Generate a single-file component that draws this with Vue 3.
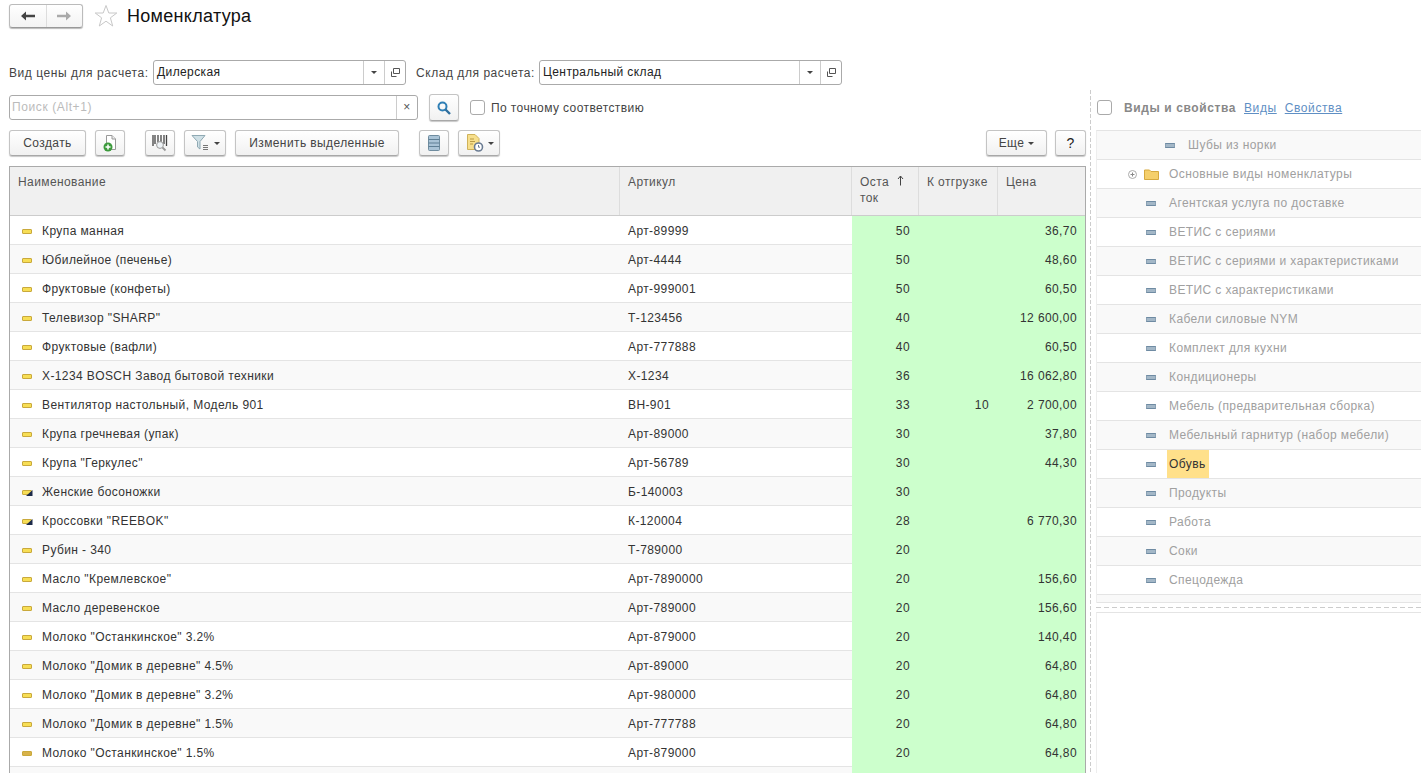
<template>
  <div class="page">
    <!-- шапка формы -->
    <div class="head">
      <div class="nav">
        <button class="nav-btn">
          <svg width="16" height="12" viewBox="0 0 16 12"><path d="M1 6 L6 1.5 V4.8 H15 V7.2 H6 V10.5 Z" fill="#444" /></svg>
        </button>
        <button class="nav-btn">
          <svg width="16" height="12" viewBox="0 0 16 12"><path d="M15 6 L10 1.5 V4.8 H1 V7.2 H10 V10.5 Z" fill="#aaa" /></svg>
        </button>
      </div>
      <svg class="star" width="24" height="24" viewBox="0 0 24 24"><path d="M12 1.5 L14.8 9 H22.8 L16.4 13.8 L18.7 22 L12 17.2 L5.3 22 L7.6 13.8 L1.2 9 H9.2 Z" fill="#fff" stroke="#c8c8c8" /></svg>
      <h1 class="title">Номенклатура</h1>
    </div>

    <div class="body">
      <div class="left">
        <div class="params">
          <label class="lbl">Вид цены для расчета:</label>
          <div class="combo combo-a">
            <span class="combo-val">Дилерская</span>
            <span class="combo-btn"><i class="caret"></i></span>
            <span class="combo-btn">
              <svg width="11" height="11" viewBox="0 0 11 11"><path d="M3.5 1.5 H9.5 V6.5 H3.5 Z M1.5 4.5 V9.5 H6.5" fill="none" stroke="#555" /></svg>
            </span>
          </div>
          <label class="lbl lbl-2">Склад для расчета:</label>
          <div class="combo combo-b">
            <span class="combo-val">Центральный склад</span>
            <span class="combo-btn"><i class="caret"></i></span>
            <span class="combo-btn">
              <svg width="11" height="11" viewBox="0 0 11 11"><path d="M3.5 1.5 H9.5 V6.5 H3.5 Z M1.5 4.5 V9.5 H6.5" fill="none" stroke="#555" /></svg>
            </span>
          </div>
        </div>

        <div class="search-row">
          <div class="search">
            <span class="search-ph">Поиск (Alt+1)</span>
            <span class="search-x">×</span>
          </div>
          <button class="btn btn-find">
            <svg width="16" height="16" viewBox="0 0 16 16"><circle cx="6.5" cy="6.5" r="4" fill="none" stroke="#2f7fb5" stroke-width="2" /><path d="M9.5 9.5 L14 14" stroke="#2f6f9f" stroke-width="2.4" /></svg>
          </button>
          <span class="check"></span>
          <span class="check-lbl">По точному соответствию</span>
        </div>

        <div class="toolbar">
          <button class="btn btn-create">Создать</button>
          <button class="btn btn-icon ml9">
            <svg width="18" height="20" viewBox="0 0 18 20"><path d="M5.5 2.5 H11 L14.500 6 V16.500 H5.5 Z" fill="#fff" stroke="#999" /><path d="M11 2.500 V6 H14.500" fill="#eee" stroke="#999" /><circle cx="7" cy="14" r="4.500" fill="#3c9a3c" /><path d="M7 11.500 V16.500 M4.500 14 H9.500" stroke="#fff" stroke-width="1.500" /></svg>
          </button>
          <button class="btn btn-icon ml20">
            <svg width="20" height="20" viewBox="0 0 20 20"><path d="M3 2 V13 M5 2 V11 M8 2 V9 M11 2 V9 M14 2 V11 M16.500 2 V13" stroke="#444" stroke-width="1.300" /><circle cx="10" cy="12" r="3.400" fill="#eef3f6" stroke="#999" /><path d="M12.500 14.500 L15.500 17.500" stroke="#999" stroke-width="1.800" /></svg>
          </button>
          <button class="btn btn-filter ml9">
            <svg width="22" height="20" viewBox="0 0 22 20"><path d="M2 2.500 H15 L10 8.500 V16 L7.500 14 V8.500 Z" fill="#cfe0e6" stroke="#8fa9b3" /><path d="M13 12.500 H18 M13 14.500 H18 M13 16.500 H18" stroke="#777" /></svg>
            <i class="caret"></i>
          </button>
          <button class="btn btn-edit ml9">Изменить выделенные</button>
          <button class="btn btn-icon ml20">
            <svg width="14" height="18" viewBox="0 0 14 18"><rect x="1.500" y="1.500" width="11" height="15" rx="1" fill="#a9c3d6" stroke="#6f8c9f" /><path d="M1.500 5.500 H12.500 M1.500 9 H12.500 M1.500 12.500 H12.500" stroke="#5f7f95" /></svg>
          </button>
          <button class="btn btn-report ml9">
            <svg width="20" height="20" viewBox="0 0 20 20"><path d="M2.500 1.500 H10 L14 5.500 V16.500 H2.500 Z" fill="#f7df8c" stroke="#cfb25a" /><path d="M5 6 H9 M5 8.500 H10 M5 11 H8" stroke="#b99b45" /><circle cx="13.500" cy="14" r="4" fill="#fff" stroke="#6a7b92" stroke-width="1.600" /><path d="M13.500 12 V14.200 H15" fill="none" stroke="#6a7b92" /></svg>
            <i class="caret"></i>
          </button>
          <button class="btn btn-more">Еще <i class="caret"></i></button>
          <button class="btn btn-help">?</button>
        </div>

        <div class="table">
          <div class="tr thead">
            <div class="th">Наименование</div>
            <div class="th">Артикул</div>
            <div class="th th-rest">
              <span>Оста<br>ток</span>
              <svg class="sort" width="7" height="11" viewBox="0 0 7 11"><path d="M3.500 10.500 V1 M1 4 L3.500 1 L6 4" fill="none" stroke="#444" /></svg>
            </div>
            <div class="th">К отгрузке</div>
            <div class="th">Цена</div>
          </div>
          <div v-for="(r, i) in rows" :key="i" class="tr row" :class="{ odd: i % 2 === 1 }">
            <div class="td td-name">
              <svg class="mark" width="11" height="7" viewBox="0 0 11 7">
                <rect x="0.500" y="1.500" width="9" height="4" rx="0.500" :fill="i === 18 ? '#d8b24a' : '#f7de55'" stroke="#c9a93c" />
                <path v-if="r.shoe" d="M4 7 L10.500 1 V7 Z" fill="#1d2b4a" />
              </svg>
              <span>{{ r.name }}</span>
            </div>
            <div class="td">{{ r.art }}</div>
            <div class="td num green">{{ r.rest }}</div>
            <div class="td num green">{{ r.ship }}</div>
            <div class="td num green">{{ r.price }}</div>
          </div>
          <div class="tr row odd"><div class="td"></div><div class="td"></div><div class="td green"></div><div class="td green"></div><div class="td green"></div></div>
        </div>
      </div>

      <div class="split"></div>

      <div class="right">
        <div class="right-head">
          <span class="check"></span>
          <b class="rh-title">Виды и свойства</b>
          <a class="rh-link">Виды</a>
          <a class="rh-link">Свойства</a>
        </div>
        <div class="tree">
          <div v-for="(t, i) in tree" :key="i" class="node" :class="{ odd: i % 2 === 0 }">
            <svg v-if="t.folder" class="plus" width="9" height="9" viewBox="0 0 9 9"><circle cx="4.500" cy="4.500" r="4" fill="#fff" stroke="#aaa" /><path d="M2.500 4.500 H6.500 M4.500 2.500 V6.500" stroke="#888" /></svg>
            <svg v-if="t.folder" class="folder" width="15" height="12" viewBox="0 0 15 12"><path d="M0.500 2 H5.500 L7 3.500 H14.500 V11.500 H0.500 Z" fill="#f5cf6b" stroke="#d6a93f" /></svg>
            <i v-else class="dash" :class="{ deep: t.deep }"></i>
            <span class="node-text" :class="{ sel: t.sel }">{{ t.name }}</span>
          </div>
          <div class="node-end"></div>
        </div>
        <div class="hsplit"></div>
        <div class="lower"></div>
      </div>
    </div>
  </div>
</template>

<script setup>
const rows = [
  { name: 'Крупа манная', art: 'Арт-89999', rest: '50', ship: '', price: '36,70' },
  { name: 'Юбилейное (печенье)', art: 'Арт-4444', rest: '50', ship: '', price: '48,60' },
  { name: 'Фруктовые (конфеты)', art: 'Арт-999001', rest: '50', ship: '', price: '60,50' },
  { name: 'Телевизор "SHARP"', art: 'Т-123456', rest: '40', ship: '', price: '12 600,00' },
  { name: 'Фруктовые (вафли)', art: 'Арт-777888', rest: '40', ship: '', price: '60,50' },
  { name: 'X-1234 BOSCH Завод бытовой техники', art: 'X-1234', rest: '36', ship: '', price: '16 062,80' },
  { name: 'Вентилятор настольный, Модель 901', art: 'ВН-901', rest: '33', ship: '10', price: '2 700,00' },
  { name: 'Крупа гречневая (упак)', art: 'Арт-89000', rest: '30', ship: '', price: '37,80' },
  { name: 'Крупа "Геркулес"', art: 'Арт-56789', rest: '30', ship: '', price: '44,30' },
  { name: 'Женские босоножки', art: 'Б-140003', rest: '30', ship: '', price: '', shoe: true },
  { name: 'Кроссовки "REEBOK"', art: 'К-120004', rest: '28', ship: '', price: '6 770,30', shoe: true },
  { name: 'Рубин - 340', art: 'Т-789000', rest: '20', ship: '', price: '' },
  { name: 'Масло "Кремлевское"', art: 'Арт-7890000', rest: '20', ship: '', price: '156,60' },
  { name: 'Масло деревенское', art: 'Арт-789000', rest: '20', ship: '', price: '156,60' },
  { name: 'Молоко "Останкинское" 3.2%', art: 'Арт-879000', rest: '20', ship: '', price: '140,40' },
  { name: 'Молоко "Домик в деревне" 4.5%', art: 'Арт-89000', rest: '20', ship: '', price: '64,80' },
  { name: 'Молоко "Домик в деревне" 3.2%', art: 'Арт-980000', rest: '20', ship: '', price: '64,80' },
  { name: 'Молоко "Домик в деревне" 1.5%', art: 'Арт-777788', rest: '20', ship: '', price: '64,80' },
  { name: 'Молоко "Останкинское" 1.5%', art: 'Арт-879000', rest: '20', ship: '', price: '64,80' },
]

const tree = [
  { name: 'Шубы из норки', deep: true },
  { name: 'Основные виды номенклатуры', folder: true },
  { name: 'Агентская услуга по доставке' },
  { name: 'ВЕТИС с сериями' },
  { name: 'ВЕТИС с сериями и характеристиками' },
  { name: 'ВЕТИС с характеристиками' },
  { name: 'Кабели силовые NYM' },
  { name: 'Комплект для кухни' },
  { name: 'Кондиционеры' },
  { name: 'Мебель (предварительная сборка)' },
  { name: 'Мебельный гарнитур (набор мебели)' },
  { name: 'Обувь', sel: true },
  { name: 'Продукты' },
  { name: 'Работа' },
  { name: 'Соки' },
  { name: 'Спецодежда' },
]
</script>

<style scoped>
.page {
  width: 1421px;
  height: 773px;
  overflow: hidden;
  background: #fff;
  font-family: "Liberation Sans", Arial, sans-serif;
  font-size: 12px;
  color: #333;
  letter-spacing: 0.4px;
}

.head {
  display: flex;
  align-items: center;
  height: 24px;
  padding: 4px 0 0 9px;
}

.nav {
  display: flex;
  width: 74px;
  height: 24px;
  box-sizing: border-box;
  border: 1px solid #bbb;
  border-bottom-color: #999;
  border-radius: 3px;
  background: linear-gradient(#fff, #f3f3f3);
  box-shadow: 0 1px 1px #bbb;
}

.nav-btn {
  flex: 1;
  display: flex;
  align-items: center;
  justify-content: center;
  padding: 0;
  border: 0;
  background: none;
}

.nav-btn + .nav-btn {
  border-left: 1px solid #ddd;
}

.star {
  margin-left: 11px;
}

.title {
  margin: 1px 0 0 9px;
  font-size: 18px;
  font-weight: normal;
  color: #111;
  letter-spacing: 0.3px;
}

.body {
  display: flex;
  margin-top: 32px;
  padding-left: 9px;
}

.left {
  width: 1077px;
  flex: none;
}

.params {
  display: flex;
  align-items: center;
  height: 25px;
}

.lbl {
  width: 144px;
  color: #444;
  letter-spacing: 0.55px;
}

.lbl-2 {
  width: 123px;
  margin-left: 10px;
}

.combo {
  display: flex;
  height: 25px;
  box-sizing: border-box;
  border: 1px solid #aaa;
  border-radius: 3px;
}

.combo-a {
  width: 253px;
}

.combo-b {
  width: 303px;
}

.combo-val {
  flex: 1;
  padding-left: 3px;
  line-height: 23px;
  color: #222;
}

.combo-btn {
  width: 20px;
  display: flex;
  align-items: center;
  justify-content: center;
  border-left: 1px solid #ccc;
}

.caret {
  display: inline-block;
  width: 0;
  height: 0;
  border-left: 3px solid transparent;
  border-right: 3px solid transparent;
  border-top: 3px solid #444;
}

.search-row {
  display: flex;
  align-items: center;
  margin-top: 9px;
  height: 27px;
}

.search {
  display: flex;
  width: 409px;
  height: 25px;
  box-sizing: border-box;
  border: 1px solid #aaa;
  border-radius: 3px;
}

.search-ph {
  flex: 1;
  padding-left: 2px;
  line-height: 23px;
  color: #bbb;
  letter-spacing: 0.6px;
}

.search-x {
  width: 20px;
  border-left: 1px solid #ccc;
  text-align: center;
  line-height: 22px;
  color: #555;
}

.btn {
  height: 26px;
  box-sizing: border-box;
  padding: 0;
  display: inline-flex;
  align-items: center;
  justify-content: center;
  border: 1px solid #c4c4c4;
  border-bottom-color: #a8a8a8;
  border-radius: 3px;
  background: linear-gradient(#fff, #f1f1f1);
  box-shadow: 0 1px 1px #c8c8c8;
  font: inherit;
  color: #444;
  letter-spacing: inherit;
}

.btn-find {
  width: 30px;
  height: 27px;
  margin-left: 11px;
}

.check {
  flex: none;
  width: 15px;
  height: 15px;
  box-sizing: border-box;
  border: 1px solid #aaa;
  border-radius: 3px;
  background: #fff;
}

.search-row .check {
  margin-left: 11px;
}

.check-lbl {
  margin-left: 6px;
  color: #444;
}

.toolbar {
  display: flex;
  align-items: flex-start;
  margin-top: 9px;
  height: 27px;
}

.ml9 {
  margin-left: 9px;
}

.ml20 {
  margin-left: 20px;
}

.btn-create {
  width: 77px;
}

.btn-icon {
  width: 30px;
}

.btn-filter {
  width: 42px;
  gap: 2px;
}

.btn-edit {
  width: 164px;
}

.btn-report {
  width: 42px;
  gap: 3px;
}

.btn-more {
  width: 61px;
  margin-left: auto;
  gap: 4px;
}

.btn-help {
  width: 31px;
  margin-left: 8px;
  font-size: 14px;
  color: #222;
}

.table {
  margin-top: 9px;
  border: 1px solid #aaa;
  border-bottom: 0;
}

.tr {
  display: grid;
  grid-template-columns: 610px 232px 66px 79px 88px;
}

.tr.thead {
  grid-template-columns: 609px 232px 67px 79px 88px;
  height: 48px;
  background: #f0f0f0;
  border-bottom: 1px solid #ccc;
}

.th {
  padding: 7px 8px;
  border-left: 1px solid #ddd;
  line-height: 16px;
  color: #555;
}

.th:first-child {
  border-left: 0;
}

.th-rest {
  position: relative;
}

.sort {
  position: absolute;
  top: 8px;
  right: 14px;
}

.row {
  height: 29px;
  box-sizing: border-box;
  border-bottom: 1px solid #e4e4e4;
}

.row.odd {
  background: #f9f9f9;
}

.td {
  padding: 1px 8px 0;
  line-height: 28px;
  color: #333;
  white-space: nowrap;
}

.td-name {
  display: flex;
  align-items: center;
  padding-left: 12px;
}

.mark {
  flex: none;
  margin-right: 9px;
}

.num {
  text-align: right;
}

.green {
  background: #ccffcc;
}

.split {
  flex: none;
  width: 10px;
  margin-top: 30px;
  height: 700px;
  background: linear-gradient(#ccc 66%, transparent 66%) 4px 0 / 1px 6px repeat-y;
}

.right {
  flex: 1;
}

.right-head {
  display: flex;
  align-items: center;
  height: 25px;
  margin-top: 35px;
  padding-left: 1px;
  letter-spacing: 0.6px;
}

.rh-title {
  margin-left: 12px;
  color: #888;
}

.rh-link {
  margin-left: 8px;
  color: #5f8fc4;
  text-decoration: underline;
}

.tree {
  margin-top: 10px;
  border-left: 1px solid #eee;
  border-top: 1px solid #e4e4e4;
}

.node {
  display: flex;
  align-items: center;
  height: 29px;
  box-sizing: border-box;
  border-bottom: 1px solid #e4e4e4;
  padding-left: 49px;
  color: #a0a0a0;
}

.node.odd {
  background: #f9f9f9;
}

.plus {
  margin-left: -18px;
}

.folder {
  margin-left: 7px;
  margin-right: 10px;
}

.dash {
  width: 10px;
  height: 5px;
  box-sizing: border-box;
  margin-right: 13px;
  background: #a3b7c7;
  border: 1px solid #6f8ba3;
  border-left-color: #8aa1b4;
  border-right-color: #8aa1b4;
}

.dash.deep {
  margin-left: 19px;
}

.node-text.sel {
  height: 28px;
  margin-left: -2px;
  padding: 0 3px 0 2px;
  line-height: 28px;
  background: #ffe08a;
  color: #333;
}

.node-end {
  height: 7px;
  background: #f9f9f9;
  border-bottom: 1px solid #e4e4e4;
}

.hsplit {
  height: 9px;
  background: linear-gradient(90deg, #ccc 62%, transparent 62%) 0 4px / 8px 1px repeat-x;
}

.lower {
  height: 200px;
  border-left: 1px solid #eee;
  border-top: 1px solid #e4e4e4;
}
</style>

<style>
body {
  margin: 0;
}
</style>
